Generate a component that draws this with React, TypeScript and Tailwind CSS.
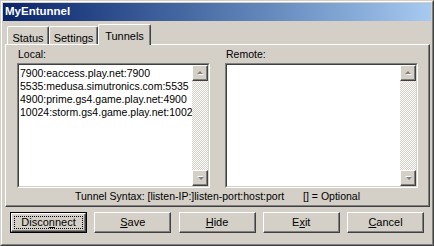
const face = "bg-[#d4d0c8]"

const raised =
  "border border-t-white border-l-white border-r-[#404040] border-b-[#404040] shadow-[inset_-1px_-1px_0_#808080]"

const localTunnels = [
  "7900:eaccess.play.net:7900",
  "5535:medusa.simutronics.com:5535",
  "4900:prime.gs4.game.play.net:4900",
  "10024:storm.gs4.game.play.net:10024",
]

const Arrow = ({ down }: { down?: boolean }) => (
  <svg width="9" height="6" viewBox="0 0 9 6" className={down ? "rotate-180" : ""}>
    <path d="M2 5h6L5 2z" fill="#ffffff" />
    <path d="M1 4h6L4 1z" fill="#808080" />
  </svg>
)

const ScrollButton = ({ down }: { down?: boolean }) => (
  <div
    className={`w-[16px] h-[16px] ${face} flex items-center justify-center border border-t-white border-l-white border-r-[#404040] border-b-[#404040] shadow-[inset_-1px_-1px_0_#808080]`}
  >
    <Arrow down={down} />
  </div>
)

const ListBox = ({ items }: { items: string[] }) => (
  <div className="h-[125px] w-[193px] flex border border-t-[#808080] border-l-[#808080] border-r-white border-b-white">
    <div className="flex flex-1 min-w-0 border border-t-[#404040] border-l-[#404040] border-r-[#d4d0c8] border-b-[#d4d0c8] bg-white">
      <div className="flex-1 min-w-0 overflow-hidden whitespace-nowrap pl-[1px] pt-[2px] leading-[13px]">
        {items.map((t) => (
          <div key={t}>{t}</div>
        ))}
      </div>
      <div className="w-[16px] shrink-0 flex flex-col bg-[repeating-conic-gradient(#ffffff_0_25%,#d4d0c8_0_50%)] bg-[length:2px_2px]">
        <ScrollButton />
        <div className="flex-1" />
        <ScrollButton down />
      </div>
    </div>
  </div>
)

const Tab = ({ label, width, active }: { label: string; width: string; active?: boolean }) => (
  <div
    className={`${width} ${face} flex justify-center border-l border-t border-white border-r border-r-[#404040] shadow-[inset_-1px_0_0_#808080] rounded-t-[2px] ${
      active ? "h-[21px] -mb-px relative z-10 pt-[3px]" : "h-[18px] pt-[3px]"
    }`}
  >
    {label}
  </div>
)

const Button = ({ children, primary }: { children: React.ReactNode; primary?: boolean }) => {
  if (primary) {
    return (
      <div className="w-[77px] h-[21px] border border-black flex">
        <div className={`flex-1 ${raised} flex p-[2px]`}>
          <div className="flex-1 border border-dotted border-black flex items-center justify-center">
            {children}
          </div>
        </div>
      </div>
    )
  }
  return (
    <div className={`w-[77px] h-[21px] ${raised} flex items-center justify-center`}>{children}</div>
  )
}

export default function App() {
  return (
    <div
      className={`w-[434px] h-[246px] ${face} border border-t-[#d4d0c8] border-l-[#d4d0c8] border-r-[#404040] border-b-[#404040] font-['Liberation_Sans',Arial,sans-serif] text-[10.5px] text-black`}
    >
      <div className="h-full border border-t-white border-l-white border-r-[#808080] border-b-[#808080] p-px flex flex-col">
        <div className="h-[18px] bg-gradient-to-r from-[#0a246a] to-[#a6caf0] pl-[2px] flex items-center text-white font-bold text-[11.5px]">
          MyEntunnel
        </div>

        <div className="mt-[3px] pl-[2px] pr-[1px]">
          <div className="h-[20px] flex items-end pl-[2px] text-[11px]">
            <Tab label="Status" width="w-[42px]" />
            <Tab label="Settings" width="w-[49px]" />
            <Tab label="Tunnels" width="w-[53px]" active />
          </div>
          <div className="h-[163px] flex flex-col border border-t-white border-l-white border-r-[#404040] border-b-[#404040] shadow-[inset_-1px_-1px_0_#808080]">
            <div className="flex gap-[15px] pl-[11px]">
              <div className="flex flex-col">
                <div className="h-[18px] pt-[2px] pl-[1px]">Local:</div>
                <ListBox items={localTunnels} />
              </div>
              <div className="flex flex-col">
                <div className="h-[18px] pt-[2px] pl-[1px]">Remote:</div>
                <ListBox items={[]} />
              </div>
            </div>
            <div className="h-[17px] flex items-center justify-center pt-[1px]">
              <span>Tunnel Syntax: [listen-IP:]listen-port:host:port</span>
              <span className="ml-[19px]">[] = Optional</span>
            </div>
          </div>
        </div>

        <div className="mt-[5px] pl-[7px] pr-[7px] flex justify-between text-[11px]">
          <Button primary>
            Disco<u>n</u>nect
          </Button>
          <Button>
            <u>S</u>ave
          </Button>
          <Button>
            <u>H</u>ide
          </Button>
          <Button>
            E<u>x</u>it
          </Button>
          <Button>
            <u>C</u>ancel
          </Button>
        </div>
      </div>
    </div>
  )
}
